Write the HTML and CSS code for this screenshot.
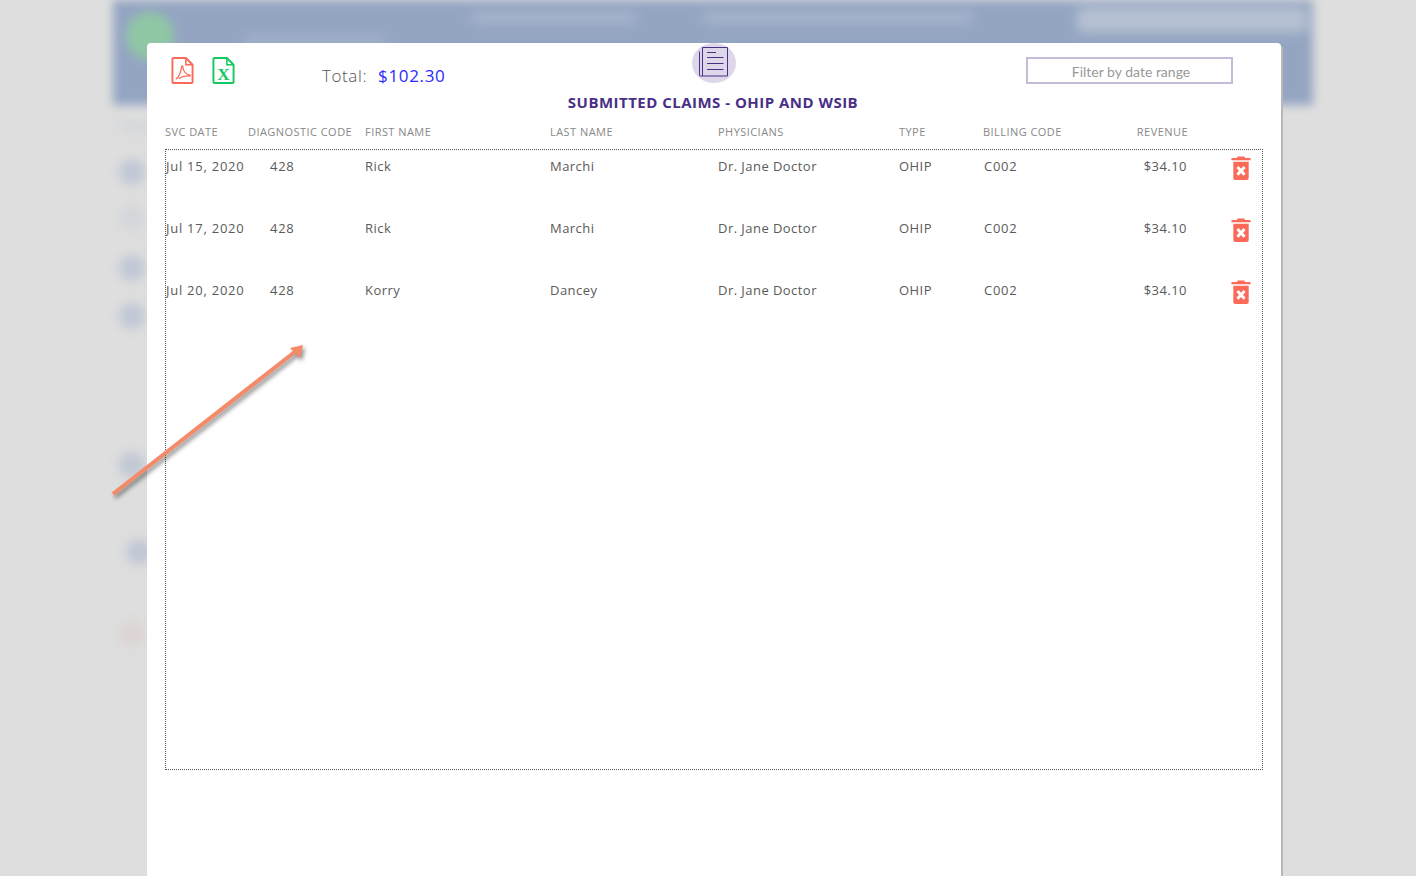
FILE: index.html
```html
<!DOCTYPE html>
<html lang="en">
<head>
  <meta charset="UTF-8">
  <meta name="viewport" content="width=device-width, initial-scale=1.0">
  <title>Submitted Claims</title>
  <link rel="stylesheet" href="styles.css">
</head>
<body>
  <!-- blurred page behind the modal -->
  <div class="backdrop">
    <div class="back-header">
      <div class="back-logo"></div>
      <div class="blob blob-a"></div>
      <div class="blob blob-b"></div>
      <div class="blob blob-c"></div>
      <div class="blob blob-d"></div>
    </div>
    <div class="back-side">
      <div class="dot dot-0"></div>
      <div class="dot dot-1"></div>
      <div class="dot dot-2"></div>
      <div class="dot dot-3"></div>
      <div class="dot dot-4"></div>
      <div class="dot dot-5"></div>
      <div class="dot dot-6"></div>
      <div class="dot dot-7"></div>
    </div>
  </div>

  <div class="modal">
    <div class="top">
      <div class="top-left">
        <svg class="file-icon pdf" viewBox="0 0 24 28" width="23" height="27">
          <path d="M2.500 1h13l7 7v18a1 1 0 0 1-1 1h-19a1 1 0 0 1-1-1V2a1 1 0 0 1 1-1z" fill="none" stroke="currentColor" stroke-width="2"/>
          <path d="M15.500 1v7h7" fill="none" stroke="currentColor" stroke-width="1.600"/>
          <path d="M5 23c3-2 5-6 6-12 0-2.500 1.500-2.500 1.500 0 0 3 3 7 6.500 7.500 1.500.3 1.500 1.500 0 1.300-4-.3-8 .5-11 2.700" fill="none" stroke="currentColor" stroke-width="1.300"/>
        </svg>
        <svg class="file-icon xls" viewBox="0 0 24 28" width="23" height="27">
          <path d="M2.500 1h13l7 7v18a1 1 0 0 1-1 1h-19a1 1 0 0 1-1-1V2a1 1 0 0 1 1-1z" fill="none" stroke="currentColor" stroke-width="2"/>
          <path d="M15.500 1v7h7" fill="none" stroke="currentColor" stroke-width="1.600"/>
          <text x="12" y="23.500" class="xls-mark">X</text>
        </svg>
        <div class="total">Total: <span class="amount">$102.30</span></div>
      </div>
      <div class="badge">
        <svg class="badge-icon" viewBox="0 0 30 30" width="30" height="30">
          <path d="M3.500 .5h25V29h-25z" fill="none" stroke="#4a2f87" stroke-width="1"/>
          <path d="M.5 4.500v23.500a1 1 0 0 0 1 1h2" fill="none" stroke="#4a2f87" stroke-width="1"/>
          <path d="M8 5.500h9M8 10.500h16.500M8 16.500h16.500M8 22.500h16.500" fill="none" stroke="#4a2f87" stroke-width="1"/>
        </svg>
      </div>
      <div class="top-right">
        <input class="filter" type="text" placeholder="Filter by date range">
      </div>
    </div>

    <h1 class="title">SUBMITTED CLAIMS - OHIP AND WSIB</h1>

    <div class="heads">
      <div>SVC DATE</div>
      <div>DIAGNOSTIC CODE</div>
      <div>FIRST NAME</div>
      <div>LAST NAME</div>
      <div>PHYSICIANS</div>
      <div>TYPE</div>
      <div>BILLING CODE</div>
      <div class="right">REVENUE</div>
    </div>

    <div class="list" id="list"></div>
  </div>

  <svg class="arrow" width="1416" height="876" viewBox="0 0 1416 876">
    <g class="arrow-shape">
      <path d="M113 494L296 351" stroke="#f58a68" stroke-width="4" fill="none"/>
      <path d="M303 345L290 348L300 358z" fill="#f58a68"/>
    </g>
  </svg>

  <template id="trash">
    <svg class="trash" viewBox="0 0 20 26" width="20" height="25">
      <path d="M6 2.500a1 1 0 0 1 1-1h6a1 1 0 0 1 1 1V3h5a1 1 0 0 1 1 1v1.500H0V4a1 1 0 0 1 1-1h5z" fill="#fb6a58"/>
      <path d="M2 7h16v17a2 2 0 0 1-2 2H4a2 2 0 0 1-2-2z" fill="#fb6a58"/>
      <path d="M6.300 12.500l7.400 8M13.700 12.500l-7.400 8" stroke="#fff" stroke-width="3" fill="none"/>
    </svg>
  </template>

  <script>
    var claims = [
      ['Jul 15, 2020', '428', 'Rick', 'Marchi', 'Dr. Jane Doctor', 'OHIP', 'C002', '$34.10'],
      ['Jul 17, 2020', '428', 'Rick', 'Marchi', 'Dr. Jane Doctor', 'OHIP', 'C002', '$34.10'],
      ['Jul 20, 2020', '428', 'Korry', 'Dancey', 'Dr. Jane Doctor', 'OHIP', 'C002', '$34.10']
    ]
    var list = document.getElementById('list')
    var trash = document.getElementById('trash')

    claims.forEach(function (claim) {
      var row = document.createElement('div')
      row.className = 'row'
      claim.forEach(function (text, i) {
        var cell = document.createElement('div')
        cell.textContent = text
        if (i === 0 || i === 1 || i === 6) cell.className = 'num'
        if (i === 7) cell.className = 'right'
        row.appendChild(cell)
      })
      row.appendChild(trash.content.cloneNode(true))
      list.appendChild(row)
    })
  </script>
</body>
</html>
```

FILE: styles.css
```css
html, body {
  height: 100%;
}
body {
  margin: 0;
  overflow: hidden;
  position: relative;
  background: #dedede;
  font-family: "Open Sans", "Liberation Sans", sans-serif;
}

/* blurred page */
.backdrop {
  width: 1200px;
  margin-left: 113px;
  filter: blur(5px);
}
.back-header {
  position: relative;
  height: 105px;
  background: #94a5c2;
}
.back-logo {
  position: absolute;
  left: 13px;
  top: 12px;
  width: 48px;
  height: 48px;
  border-radius: 50%;
  background: #8fc7a5;
}
.blob {
  position: absolute;
  background: #a8b5cc;
  filter: blur(3px);
}
.blob-a { left: 358px; top: 12px; width: 165px; height: 11px; }
.blob-b { left: 590px; top: 12px; width: 270px; height: 11px; }
.blob-c { left: 964px; top: 8px; width: 230px; height: 24px; background: #b6c1d3; }
.blob-d { left: 132px; top: 36px; width: 140px; height: 8px; }

.back-side {
  display: flex;
  flex-direction: column;
  padding: 15px 0 0 6px;
}
.dot {
  width: 26px;
  height: 26px;
  border-radius: 50%;
  background: #c0c7d4;
  filter: blur(2px);
}
.dot-0 { width: 40px; height: 14px; border-radius: 0; background: #d6d8db; }
.dot-1 { margin-top: 25px; }
.dot-2 { margin-top: 20px; background: #d3d6da; }
.dot-3 { margin-top: 24px; }
.dot-4 { margin-top: 22px; }
.dot-5 { margin-top: 123px; }
.dot-6 { margin-top: 61px; margin-left: 7px; }
.dot-7 { margin-top: 55px; background: #dcd4d2; }

/* modal */
.modal {
  position: absolute;
  left: 147px;
  top: 43px;
  width: 1134px;
  height: 850px;
  background: #fff;
  border-radius: 4px;
  box-shadow: 2px 2px 0 #b8b8b8;
}
.top {
  display: grid;
  grid-template-columns: 1fr 43px 1fr;
  grid-template-rows: 40px;
}
.top-left {
  display: flex;
  align-items: flex-start;
  padding: 14px 0 0 24px;
}
.file-icon {
  margin-right: 18px;
}
.pdf { color: #fb6a58; }
.xls { color: #14c95f; }
.xls-mark {
  font-family: "Liberation Serif", serif;
  font-weight: bold;
  font-size: 18px;
  text-anchor: middle;
  fill: #14c95f;
}
.total {
  margin: 7px 0 0 69px;
  font-size: 17px;
  font-weight: 300;
  line-height: 24px;
  color: #555;
  letter-spacing: .6px;
  white-space: pre;
}
.amount {
  margin-left: 6px;
  font-weight: 400;
  color: #2a2aff;
  letter-spacing: .65px;
}
.badge {
  display: flex;
  align-items: center;
  justify-content: center;
  margin-left: -1px;
  border-radius: 50%;
  background: #ddd7e9;
}
.badge-icon {
  margin-top: -2px;
}
.top-right {
  display: flex;
  justify-content: flex-end;
  padding: 14px 48px 0 0;
}
.filter {
  box-sizing: border-box;
  width: 207px;
  height: 27px;
  border: 2px solid #c5bbd8;
  padding: 1px 0 0 3px;
  outline: none;
  text-align: center;
  font-family: Lato, sans-serif;
  font-size: 14px;
}
.filter::placeholder {
  color: #999;
  opacity: 1;
}
.title {
  margin: 9px 0 0 -2px;
  font-size: 15px;
  line-height: 20px;
  font-weight: 700;
  letter-spacing: .48px;
  text-align: center;
  color: #4a2f87;
}
.heads, .row {
  display: grid;
  align-items: start;
}
.heads {
  grid-template-columns: 83px 117px 185px 168px 181px 84px 152px 53px;
  margin: 11px 0 0 18px;
  font-size: 11px;
  line-height: 18px;
  letter-spacing: .45px;
  color: #888;
  white-space: nowrap;
}
.right {
  justify-self: end;
  text-align: right;
}
.list {
  box-sizing: border-box;
  width: 1098px;
  height: 621px;
  margin: 8px 0 0 18px;
  border: 1px dotted #555;
}
.row {
  grid-template-columns: 104px 95px 185px 168px 181px 85px 152px 51px 64px;
  height: 62px;
  padding-top: 6px;
  box-sizing: border-box;
  font-size: 13px;
  line-height: 20px;
  letter-spacing: .45px;
  color: #5a5a5a;
}
.num {
  letter-spacing: .75px;
}
.trash {
  justify-self: end;
  margin-top: -1px;
}

.arrow {
  position: absolute;
  left: 0;
  top: 0;
  pointer-events: none;
}
.arrow-shape {
  filter: drop-shadow(2px 3px 2px rgba(0, 0, 0, .45));
}
```
